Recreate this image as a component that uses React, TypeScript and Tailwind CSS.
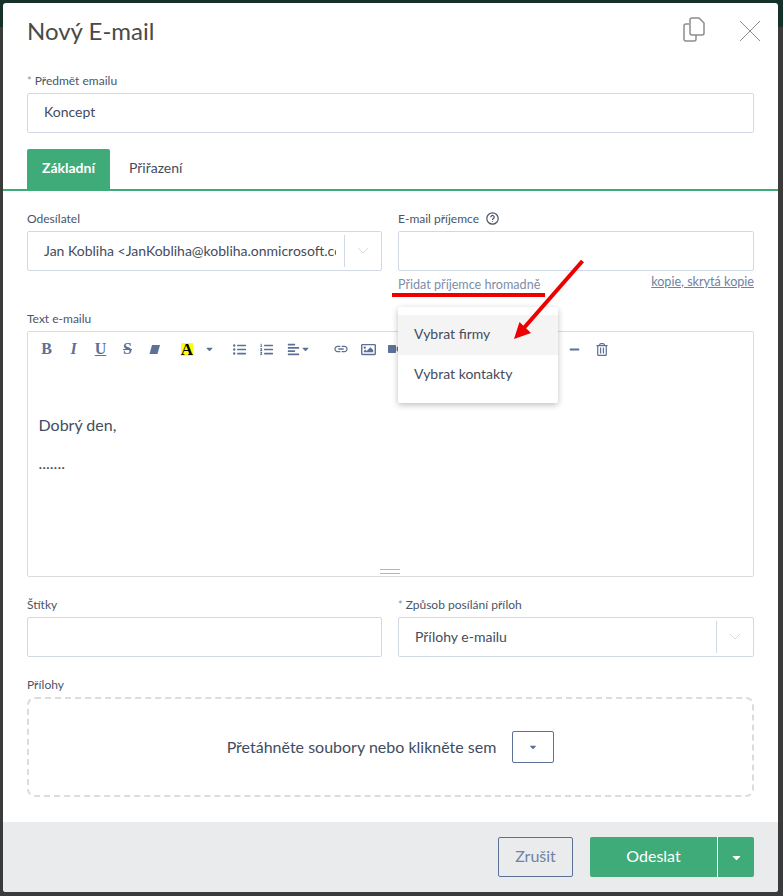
import {
  FaListUl,
  FaListOl,
  FaAlignLeft,
  FaRegImage,
  FaVideo,
  FaMinus,
  FaRegTrashAlt,
  FaCaretDown,
} from "react-icons/fa";
import { MdLink } from "react-icons/md";

const Label = ({ children, required }: { children: React.ReactNode; required?: boolean }) => (
  <div className="flex h-[15px] items-center text-[12px] leading-[15px] text-[#4a5568]">
    {required && <span className="mr-[3px] text-[11px] text-[#8a94a6]">*</span>}
    {children}
  </div>
);

const Chevron = () => (
  <svg width="14" height="8" viewBox="0 0 14 8" fill="none" stroke="#d5d9e0" strokeWidth="1">
    <path d="M2 1l5 5 5-5" />
  </svg>
);

const Select = ({ value }: { value: string }) => (
  <div className="mt-[5px] flex h-10 items-center rounded-[2px] border border-[#d3d8e6] bg-white">
    <div className="min-w-0 flex-1 overflow-hidden whitespace-nowrap pb-[2px] pl-4 text-[14px] text-[#434c5e]">{value}</div>
    <div className="ml-[8px] h-[32px] w-px bg-[#d3d8e6]" />
    <div className="flex w-[36px] justify-center">
      <Chevron />
    </div>
  </div>
);

const Input = () => <div className="mt-[5px] h-10 rounded-[2px] border border-[#d3d8e6] bg-white" />;

const ToolIcon = ({ children, className }: { children: React.ReactNode; className: string }) => (
  <span className={`flex shrink-0 items-center justify-center text-[#5d7196] ${className}`}>{children}</span>
);

const Toolbar = () => (
  <div className="flex h-[34px] items-center pl-[13px] font-['Liberation_Serif',serif] text-[16px] leading-none font-bold">
    <ToolIcon className="w-[11px]">B</ToolIcon>
    <ToolIcon className="ml-[16px] w-[11px] italic">I</ToolIcon>
    <ToolIcon className="ml-[15px] w-[13px] underline">U</ToolIcon>
    <ToolIcon className="ml-[14px] w-[13px] line-through">S</ToolIcon>
    <ToolIcon className="ml-[15px] w-[11px]">
      <svg width="11" height="9" viewBox="0 0 11 9" fill="currentColor">
        <path d="M3 0h8L8.500 9H0.500z" />
      </svg>
    </ToolIcon>
    <span className="ml-[21px] flex h-[13px] w-[12px] shrink-0 items-center justify-center bg-[#ffff00] text-[17px] leading-[13px] font-bold text-black">
      A
    </span>
    <ToolIcon className="ml-[12px] w-[9px]"><FaCaretDown size={10} /></ToolIcon>
    <ToolIcon className="ml-[19px] w-[13px]"><FaListUl size={13} /></ToolIcon>
    <ToolIcon className="ml-[14px] w-[13px]"><FaListOl size={13} /></ToolIcon>
    <ToolIcon className="ml-[14px] w-[13px]"><FaAlignLeft size={13} /></ToolIcon>
    <ToolIcon className="ml-[1px] w-[9px]"><FaCaretDown size={10} /></ToolIcon>
    <ToolIcon className="ml-[23px] w-[16px]"><MdLink size={18} /></ToolIcon>
    <ToolIcon className="ml-[12px] w-[15px]"><FaRegImage size={15} /></ToolIcon>
    <ToolIcon className="ml-[11px] w-[14px]"><FaVideo size={12} /></ToolIcon>
    <ToolIcon className="ml-[168px] w-[11px]"><FaMinus size={11} /></ToolIcon>
    <ToolIcon className="ml-[16px] w-[12px]"><FaRegTrashAlt size={13} /></ToolIcon>
  </div>
);

export default function App() {
  return (
    <div className="h-[896px] w-[783px] overflow-hidden bg-[linear-gradient(#16302a_0px,#16302a_27px,#3b3b3b_27px)] pt-[3px] pr-[5px] pb-[4px] pl-[3px] font-['Lato',sans-serif] text-[#434c5e]">
      <div className="relative flex h-[889px] flex-col overflow-hidden rounded-[3px] bg-white">
        <header className="flex h-[55px] items-center justify-between pr-[17px] pl-6">
          <h1 className="text-[24px] leading-[30px] font-normal text-[#4a4a4a]">Nový E-mail</h1>
          <div className="flex items-center gap-[34px]">
            <svg className="-mt-[3px]" width="22" height="25" viewBox="0 0 22 25" fill="none" stroke="#8c8c8c" strokeWidth="1.5">
              <path d="M6 7H3a2 2 0 0 0-2 2v13a2 2 0 0 0 2 2h8a2 2 0 0 0 2-2v-4" />
              <path d="M9 1h7l5 5v10a2 2 0 0 1-2 2H9a2 2 0 0 1-2-2V3a2 2 0 0 1 2-2z" />
            </svg>
            <svg width="22" height="22" viewBox="0 0 22 22" fill="none" stroke="#8c8c8c" strokeWidth="1">
              <path d="M1 1l20 20M21 1L1 21" />
            </svg>
          </div>
        </header>

        <div className="px-6 pt-[15px]">
          <Label required>Předmět emailu</Label>
          <div className="mt-[5px] flex h-10 items-center rounded-[2px] border border-[#d3d8e6] pb-[4px] pl-4 text-[14px] text-[#434c5e]">
            Koncept
          </div>
        </div>

        <div className="mt-4 flex h-[42px] border-b-2 border-[#3fab79] px-6">
          <div className="flex h-10 w-[83px] items-center justify-center rounded-t-[2px] bg-[#3fab79] pb-[4px] text-[14px] font-bold text-white">
            Základní
          </div>
          <div className="flex h-10 items-center pb-[4px] pl-[19px] text-[14px] text-[#434c5e]">Přiřazení</div>
        </div>

        <div className="grid grid-cols-[355px_1fr] gap-x-4 px-6 pt-[20px]">
          <div>
            <Label>Odesílatel</Label>
            <Select value="Jan Kobliha <JanKobliha@kobliha.onmicrosoft.com>" />
          </div>
          <div>
            <Label>
              E-mail příjemce
              <svg className="ml-[7px]" width="13" height="13" viewBox="0 0 13 13" fill="none" stroke="#4a5568" strokeWidth="1.2">
                <circle cx="6.500" cy="6.500" r="5.700" />
                <path d="M4.800 5.200a1.700 1.700 0 1 1 2.600 1.400c-.6.4-.9.7-.9 1.300" />
                <path d="M6.500 9.200v.9" />
              </svg>
            </Label>
            <Input />
            <div className="mt-[5px] mb-[1px] flex h-[16px] items-start justify-between text-[12.6px] leading-[16px]">
              <span className="mt-[1px] text-[#7d8eab]">Přidat příjemce hromadně</span>
              <span className="-mt-[2px] text-[#6f82a3] underline">kopie, skrytá kopie</span>
            </div>
          </div>
        </div>

        <div className="px-6 pt-[18px]">
          <Label>Text e-mailu</Label>
          <div className="mt-[5px] flex h-[246px] flex-col rounded-[2px] border border-[#dcdcdc]">
            <Toolbar />
            <div className="pt-[49px] pl-[10.5px] text-[16px] leading-[20px] text-[#434c5e]">
              <p>Dobrý den,</p>
              <p className="mt-[18px]">.......</p>
            </div>
            <div className="mt-auto flex justify-center pr-[2px] pb-[2px]">
              <div className="h-[5px] w-[20px] border-y border-[#b5b5b5]" />
            </div>
          </div>
        </div>

        <div className="grid grid-cols-[355px_1fr] gap-x-4 px-6 pt-[20px]">
          <div>
            <Label>Štítky</Label>
            <Input />
          </div>
          <div>
            <Label required>Způsob posílání příloh</Label>
            <Select value="Přílohy e-mailu" />
          </div>
        </div>

        <div className="px-6 pt-[20px]">
          <Label>Přílohy</Label>
          <div className="mt-[5px] flex h-[100px] items-center justify-center rounded-[8px] border-2 border-dashed border-[#dcdcdc]">
            <span className="text-[16px] text-[#434c5e]">Přetáhněte soubory nebo klikněte sem</span>
            <div className="ml-4 flex h-8 w-[42px] items-center justify-center rounded-[2px] border border-[#5d7196]">
              <FaCaretDown size={10} className="text-[#5d7196]" />
            </div>
          </div>
        </div>

        <footer className="mt-auto flex h-[70px] items-center justify-end gap-[17px] bg-[#e9ebed] px-6">
          <div className="flex h-10 w-[75px] items-center justify-center rounded-[2px] border border-[#5d7196] pb-[2px] text-[16px] text-[#6f82a3]">
            Zrušit
          </div>
          <div className="flex h-10 w-[164px] overflow-hidden rounded-[2px] bg-[#3fab79] text-white">
            <div className="flex w-[127px] items-center justify-center pb-[2px] text-[16px]">Odeslat</div>
            <div className="flex flex-1 items-center justify-center border-l border-white">
              <FaCaretDown size={13} />
            </div>
          </div>
        </footer>

        {/* dropdown menu over the form */}
        <div className="absolute top-[304px] left-[395px] w-[160px] rounded-[2px] bg-white py-[8px] text-[14px] text-[#434c5e] shadow-[0_2px_6px_rgba(0,0,0,0.25)]">
          <div className="flex h-10 items-center bg-[#f4f4f4] pb-[4px] pl-4">Vybrat firmy</div>
          <div className="flex h-10 items-center pb-[4px] pl-4">Vybrat kontakty</div>
        </div>

        {/* red annotation drawn on top of the screenshot */}
        <svg className="absolute top-[255px] left-[389px]" width="200" height="90" viewBox="0 0 200 90" fill="none">
          <path d="M0 37h153" stroke="#ee0000" strokeWidth="4" />
          <path d="M190.500 3L131 71" stroke="#ee0000" strokeWidth="4" />
          <path d="M122 81l5.500-17 11.500 11z" fill="#ee0000" />
        </svg>
      </div>
    </div>
  );
}
